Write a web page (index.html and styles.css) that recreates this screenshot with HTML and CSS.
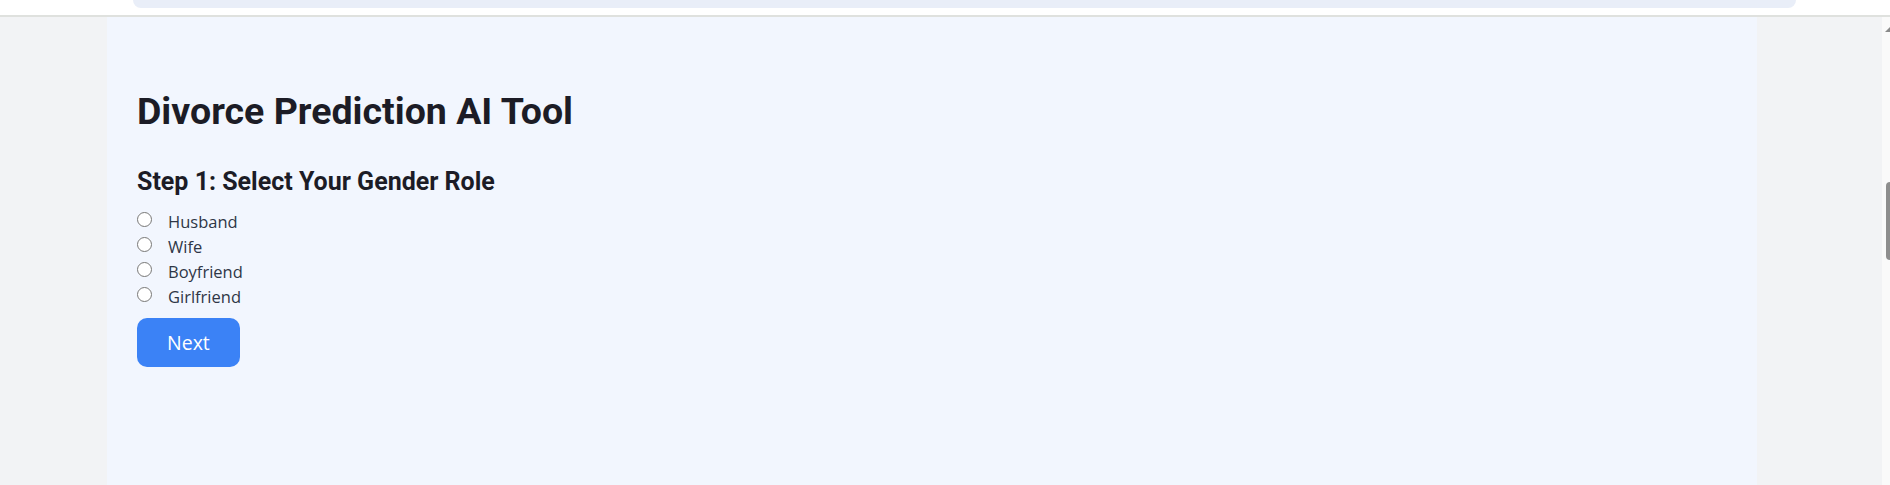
FILE: index.html
```html
<!DOCTYPE html>
<html lang="en">
<head>
    <meta charset="UTF-8">
    <meta name="viewport" content="width=device-width, initial-scale=1.0">
    <title>Divorce Prediction AI Tool</title>
    <link rel="stylesheet" href="styles.css">
</head>
<body>
    <div class="chrome">
        <div class="address-bar"></div>
    </div>
    <div class="viewport">
        <div class="page">
            <div class="container">
                <h1>Divorce Prediction AI Tool</h1>
                <h2>Step 1: Select Your Gender Role</h2>
                <div class="options">
                    <label class="option"><input type="radio" name="role" value="husband"> Husband</label>
                    <label class="option"><input type="radio" name="role" value="wife"> Wife</label>
                    <label class="option"><input type="radio" name="role" value="boyfriend"> Boyfriend</label>
                    <label class="option"><input type="radio" name="role" value="girlfriend"> Girlfriend</label>
                </div>
                <button class="next-button">Next</button>
            </div>
        </div>
        <div class="scrollbar">
            <span class="scroll-arrow"></span>
            <span class="scroll-thumb"></span>
        </div>
    </div>
</body>
</html>
```

FILE: styles.css
```css
body {
    margin: 0;
    height: 485px;
    overflow: hidden;
    display: flex;
    flex-direction: column;
    font-family: "Open Sans", "Noto Sans", sans-serif;
    background-color: #fff;
}
.chrome {
    height: 15px;
    background-color: #fff;
    border-bottom: 2px solid #dfe1de;
    padding: 0 94px 0 133px;
    flex-shrink: 0;
}
.address-bar {
    height: 8px;
    background-color: #e9eef8;
    border-radius: 0 0 14px 14px;
}
.viewport {
    flex: 1;
    display: flex;
    min-height: 0;
}
.page {
    flex: 1;
    background-color: #f2f3f5;
    padding-left: 107px;
}
.container {
    width: 1650px;
    height: 100%;
    box-sizing: border-box;
    background-color: #f2f6fe;
    padding: 72px 30px;
}
h1 {
    margin: 0 0 30px;
    font-family: Roboto, "Liberation Sans", sans-serif;
    font-size: 37.5px;
    line-height: 45px;
    font-weight: 700;
    color: #1c1c26;
}
h2 {
    margin: 0 0 10px;
    font-family: Roboto, "Liberation Sans", sans-serif;
    font-size: 25px;
    line-height: 35px;
    font-weight: 700;
    color: #1c1c26;
}
.options {
    display: flex;
    flex-direction: column;
}
.option {
    display: flex;
    align-items: center;
    height: 25px;
    font-size: 16.5px;
    color: #2f3646;
}
.option input {
    width: 15px;
    height: 15px;
    margin: 0 16px 0 0;
    position: relative;
    top: -2px;
}
.next-button {
    margin-top: 9px;
    padding: 10px 30px;
    border: none;
    border-radius: 10px;
    background-color: #3b82f6;
    color: #fff;
    font-family: "Open Sans", "Noto Sans", sans-serif;
    font-size: 19.5px;
    line-height: 29px;
    cursor: pointer;
}
.scrollbar {
    width: 8px;
    background-color: #fafafa;
    position: relative;
}
.scroll-arrow {
    position: absolute;
    top: 10px;
    right: 0;
    width: 0;
    height: 0;
    border-left: 5px solid transparent;
    border-bottom: 5px solid #8a8a8a;
}
.scroll-thumb {
    position: absolute;
    top: 165px;
    right: 0;
    width: 4px;
    height: 78px;
    border-radius: 4px 0 0 4px;
    background-color: #8e8e8e;
}
```
